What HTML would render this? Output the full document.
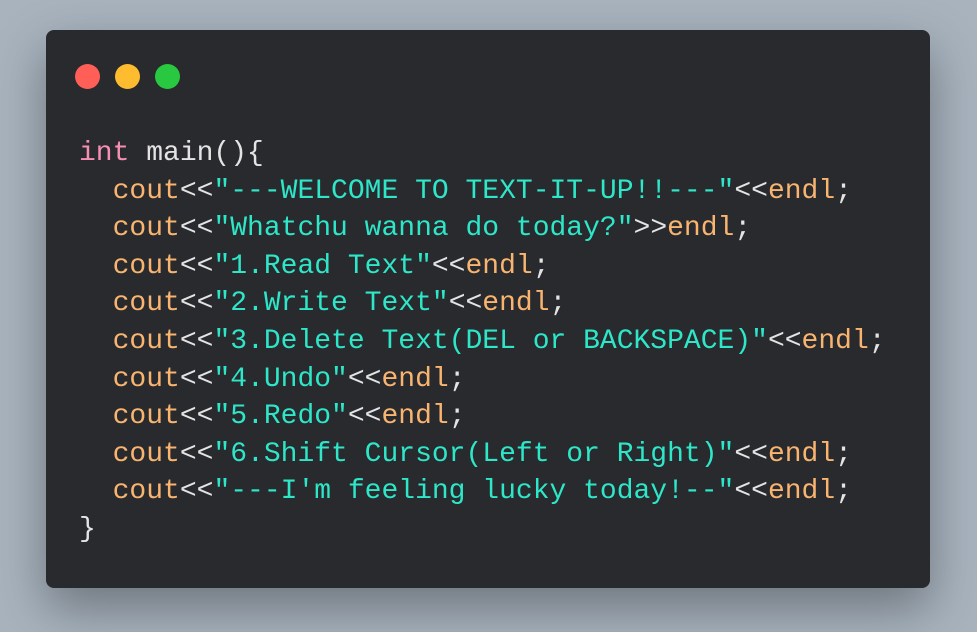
<!DOCTYPE html>
<html><head><style>
html,body{margin:0;padding:0;width:977px;height:632px;overflow:hidden;background:#a8b3be;}
.win{position:absolute;left:46px;top:30px;width:884px;height:558px;background:#282a2e;border-radius:8px;box-shadow:0 20px 50px rgba(0,0,0,.35);}
.dot{position:absolute;top:34px;width:25px;height:25px;border-radius:50%;}
pre{position:absolute;left:33px;top:105px;margin:0;font-family:"Liberation Mono","DejaVu Sans Mono",monospace;font-size:28px;line-height:37.6px;color:#e4e4e4;}
.k{color:#f78fb3}.o{color:#f9b470}.s{color:#2ee6c8}
</style></head><body>
<div class="win">
<div class="dot" style="left:29px;background:#ff5f57"></div>
<div class="dot" style="left:69px;background:#febc2e"></div>
<div class="dot" style="left:109px;background:#28c840"></div>
<pre><span class="k">int</span> main(){
  <span class="o">cout</span>&lt;&lt;<span class="s">"---WELCOME TO TEXT-IT-UP!!---"</span>&lt;&lt;<span class="o">endl</span>;
  <span class="o">cout</span>&lt;&lt;<span class="s">"Whatchu wanna do today?"</span>&gt;&gt;<span class="o">endl</span>;
  <span class="o">cout</span>&lt;&lt;<span class="s">"1.Read Text"</span>&lt;&lt;<span class="o">endl</span>;
  <span class="o">cout</span>&lt;&lt;<span class="s">"2.Write Text"</span>&lt;&lt;<span class="o">endl</span>;
  <span class="o">cout</span>&lt;&lt;<span class="s">"3.Delete Text(DEL or BACKSPACE)"</span>&lt;&lt;<span class="o">endl</span>;
  <span class="o">cout</span>&lt;&lt;<span class="s">"4.Undo"</span>&lt;&lt;<span class="o">endl</span>;
  <span class="o">cout</span>&lt;&lt;<span class="s">"5.Redo"</span>&lt;&lt;<span class="o">endl</span>;
  <span class="o">cout</span>&lt;&lt;<span class="s">"6.Shift Cursor(Left or Right)"</span>&lt;&lt;<span class="o">endl</span>;
  <span class="o">cout</span>&lt;&lt;<span class="s">"---I'm feeling lucky today!--"</span>&lt;&lt;<span class="o">endl</span>;
}</pre>
</div>
</body></html>
